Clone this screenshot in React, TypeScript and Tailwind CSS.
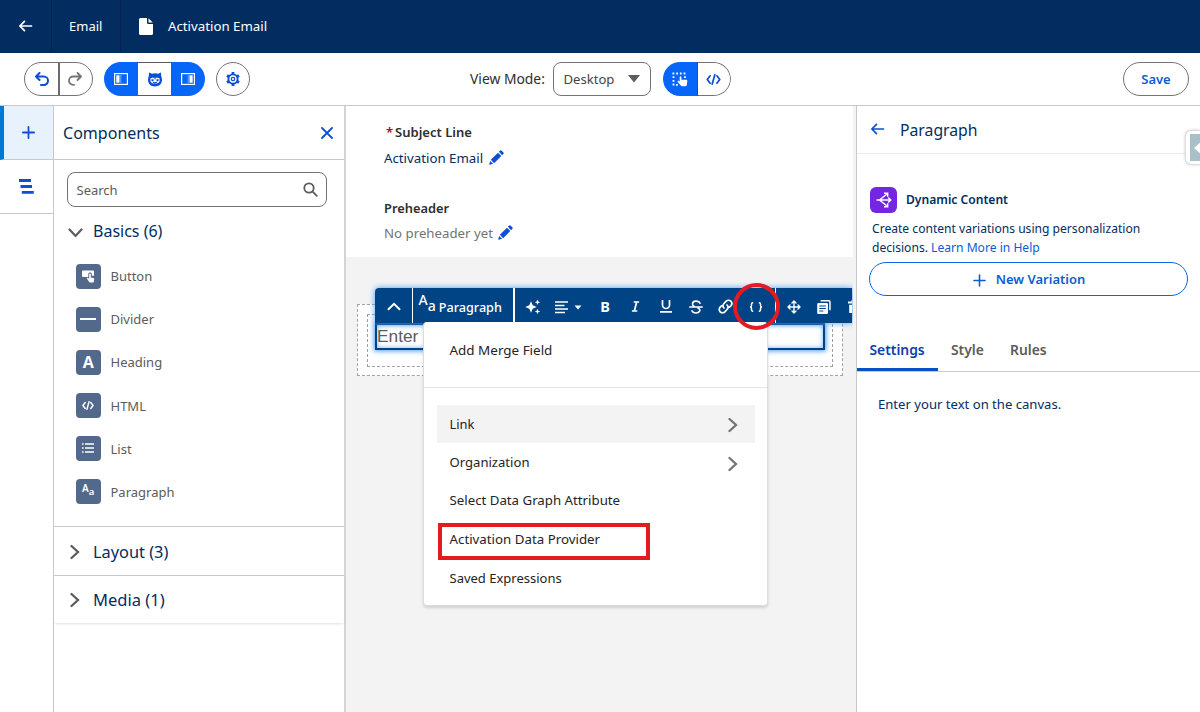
import React from "react";

type IconProps = { className?: string };

const BackArrow = ({ className }: IconProps) => (
  <svg viewBox="0 0 16 14" className={className} fill="none" stroke="currentColor" strokeWidth="2" strokeLinecap="round" strokeLinejoin="round">
    <path d="M15 7H1.600M6.800 1.500 1.400 7l5.400 5.500" />
  </svg>
);

const ChevronRight = ({ className }: IconProps) => (
  <svg viewBox="0 0 10 16" width="10" height="16" className={className} fill="none" stroke="currentColor" strokeWidth="2.300" strokeLinecap="round">
    <path d="m1.500 2 6.500 6-6.500 6" />
  </svg>
);

const CodeIcon = ({ className }: IconProps) => (
  <svg viewBox="0 0 16 12" className={className} fill="none" stroke="currentColor" strokeWidth="1.900" strokeLinecap="round" strokeLinejoin="round">
    <path d="M4.300 2 1.200 6l3.100 4M11.700 2l3.100 4-3.100 4M9.400 1 6.600 11" />
  </svg>
);

const Pencil = () => (
  <svg viewBox="0 0 14 14" width="15" height="15" fill="#0b4fd6" className="-mt-[4px]">
    <path d="M10.200.7a1.200 1.200 0 0 1 1.700 0l1.400 1.400a1.200 1.200 0 0 1 0 1.700l-1 1L9.200 1.700ZM8.400 2.500l3.100 3.100-6.700 6.700-3.100-3.100ZM1.100 10.200l2.700 2.700-3 .9c-.4.1-.7-.2-.6-.6Z" />
  </svg>
);

const LetterPair = ({ big, small, className }: { big: string; small: string; className?: string }) => (
  <span className={`flex items-start leading-none ${className ?? ""}`}>
    <span className={big}>A</span>
    <span className={small}>a</span>
  </span>
);

const basics: { label: string; icon: React.ReactNode }[] = [
  {
    label: "Button",
    icon: (
      <svg viewBox="0 0 24 25" width="24" height="25">
        <path fill="#fff" d="M7 6.500h10a1 1 0 0 1 1 1v4.200h-2.200V10c0-2-3.500-2-3.500 0v3H7a1 1 0 0 1-1-1V7.500a1 1 0 0 1 1-1Z" />
        <path fill="#fff" d="M13.200 10.200c0-1 1.600-1 1.600 0v3.200l2.500.5c.7.200 1 .6.900 1.300l-.6 3.300h-4l-2.600-3.700c-.4-.8.5-1.400 1.200-.9l1 .8Z" />
      </svg>
    ),
  },
  { label: "Divider", icon: <span className="h-[2px] w-4 bg-white" /> },
  { label: "Heading", icon: <span className="font-['Open_Sans',sans-serif] text-[16px] leading-none font-bold">A</span> },
  { label: "HTML", icon: <CodeIcon className="h-[9px] w-3" /> },
  {
    label: "List",
    icon: (
      <svg viewBox="0 0 12 10" width="12" height="10" stroke="#fff" strokeWidth="1.300">
        <path d="M0 1h1.600M3 1h9M0 5h1.600M3 5h9M0 9h1.600M3 9h9" />
      </svg>
    ),
  },
  {
    label: "Paragraph",
    icon: <LetterPair className="-mt-[3px]" big="text-[10px] font-semibold" small="mt-1 text-[9.500px] font-semibold" />,
  },
];

const mergeOptions = [
  { label: "Link", nested: true, active: true, size: "text-[12.900px]" },
  { label: "Organization", nested: true, active: false, size: "text-[13.100px]" },
  { label: "Select Data Graph Attribute", nested: false, active: false, size: "text-[13.250px]" },
  { label: "Activation Data Provider", nested: false, active: false, size: "text-[13.300px] pt-[1.500px]" },
  { label: "Saved Expressions", nested: false, active: false, size: "text-[13px] pt-[1.500px]" },
];

function AppHeader() {
  return (
    <header className="flex h-[53px] shrink-0 items-center bg-[#032d60] text-white">
      <div className="flex h-full w-[52px] items-center justify-center border-r border-[#04244d]">
        <BackArrow className="-mt-px h-[12px] w-[15px]" />
      </div>
      <div className="flex h-full w-[69px] items-center border-r border-[#04244d] pl-[17px] text-[13px]">Email</div>
      <svg viewBox="0 0 14 17" width="14" height="17" className="-mt-px ml-[18px]">
        <path fill="#fff" d="M1.500 0H8v4.500A1.500 1.500 0 0 0 9.500 6H14v9.500a1.500 1.500 0 0 1-1.500 1.500h-11A1.500 1.500 0 0 1 0 15.500v-14A1.500 1.500 0 0 1 1.500 0ZM9.500.3 13.700 4.500H10a.5.5 0 0 1-.5-.5Z" />
      </svg>
      <span className="ml-[15px] text-[13.250px]">Activation Email</span>
    </header>
  );
}

function PanelIcon({ right = false }: { right?: boolean }) {
  return (
    <svg viewBox="0 0 14 12" width="14" height="12">
      <rect x=".6" y=".6" width="12.800" height="10.800" fill="none" stroke="#fff" strokeWidth="1.200" />
      <rect x={right ? 8.5 : 2.3} y="2.300" width="3.200" height="7.400" fill="#fff" />
      <path d={right ? "M7.200 2v8" : "M6.800 2v8"} stroke="#8fbcff" strokeWidth=".8" />
    </svg>
  );
}

function Toolbar() {
  return (
    <div className="flex h-[53px] shrink-0 items-center border-b border-[#c9c9c9] bg-white pr-[11px] pl-6">
      <div className="flex h-[34px] w-[69px] overflow-hidden rounded-full border border-[#747474]">
        <button className="flex flex-1 items-center justify-center border-r-2 border-[#6a6a6a] pl-px text-[#0b4fd6]">
          <svg viewBox="0 0 14 14" width="14" height="14" fill="none" stroke="currentColor" strokeWidth="2" strokeLinecap="round" strokeLinejoin="round">
            <path d="M4.500 1 1 4.500 4.500 8M1.300 4.500h7.500a4.200 4.200 0 0 1 0 8.400H6" />
          </svg>
        </button>
        <button className="flex flex-1 items-center justify-center pr-px text-[#747474]">
          <svg viewBox="0 0 14 14" width="14" height="14" fill="none" stroke="currentColor" strokeWidth="1.800" strokeLinecap="round" strokeLinejoin="round">
            <path d="M9.500 1 13 4.500 9.500 8M12.700 4.500H5.200a4.200 4.200 0 0 0 0 8.400H6" />
          </svg>
        </button>
      </div>
      <div className="ml-[11px] flex h-[34px] w-[101px] overflow-hidden rounded-full">
        <button className="flex w-[34px] items-center justify-center bg-[#0666f8]"><PanelIcon /></button>
        <button className="flex w-[33px] items-center justify-center border-y border-[#5c5c5c] bg-white">
          <svg viewBox="0 0 16 15" width="16" height="15">
            <path fill="#0b4fd6" d="M2 .5 5 1.800a8 8 0 0 1 6 0L14 .5l.2 3.700a6.800 6.800 0 0 1 .8 3.600C15 12 12 14.500 8 14.500S1 12 1 7.800c0-1.400.2-2.600.8-3.600Z" />
            <path fill="#fff" d="M5.200 5.700h5.600a2 2 0 0 1 2 2.200c0 2.300-1.900 3.700-4.800 3.700s-4.800-1.400-4.800-3.700a2 2 0 0 1 2-2.200Z" />
            <path d="M8 5v2.300M3.800 8h3M9.200 8h3M5.600 7.300v2M10.400 7.300v2M6 10.300c1.200.7 2.800.7 4 0" stroke="#0b4fd6" strokeWidth="1.200" fill="none" />
          </svg>
        </button>
        <button className="flex w-[34px] items-center justify-center bg-[#0666f8]"><PanelIcon right /></button>
      </div>
      <button className="ml-[11px] flex h-[34px] w-[34px] items-center justify-center rounded-full border border-[#747474] text-[#0b4fd6]">
        <svg viewBox="0 0 16 16" width="16" height="16" fill="none" stroke="currentColor">
          <circle cx="8" cy="8" r="4.600" strokeWidth="1.900" />
          <circle cx="8" cy="8" r="1.700" strokeWidth="1.200" />
          <path d="M8 3.500V1M8 12.500V15M4 5.700 2 4.500M12 10.300l2 1.200M4 10.300l-2 1.200M12 5.700l2-1.200" strokeWidth="2.800" />
        </svg>
      </button>
      <span className="ml-[220px] w-[83px] pt-px text-[13.850px] whitespace-nowrap text-[#2e2e2e]">View Mode:</span>
      <div className="flex h-[34px] w-[98px] items-center justify-between rounded-[8px] border border-[#747474] pr-[10px] pl-[9.500px] text-[13.100px] text-[#444]">
        <span className="pt-[2px]">Desktop</span>
        <svg viewBox="0 0 12 8" width="12" height="8"><path d="M0 0h12L6 7.500Z" fill="#5c5c5c" /></svg>
      </div>
      <div className="ml-3 flex h-[34px] w-[68px] overflow-hidden rounded-full">
        <button className="flex w-[35px] items-center justify-center border-r border-[#3a4a66] bg-[#0666f8]">
          <svg viewBox="0 0 16 15" width="16" height="15">
            <path d="M.5 1.500h14M1.500 4.200v10M13 4.200v2M4 12.800h3" stroke="#fff" strokeWidth="1.800" strokeDasharray="1.800 1.900" fill="none" />
            <path fill="#fff" d="M7.700 5.200c0-1.200 1.700-1.200 1.700 0v2.600h4.900c.7 0 1.100.6 1 1.200l-.4 3.500c-.1 1-.8 1.700-1.800 1.700h-2.800c-.7 0-1.300-.3-1.700-.9L5.700 10c-.4-.9.5-1.500 1.200-1l.8.6Z" />
          </svg>
        </button>
        <button className="flex flex-1 items-center justify-center rounded-r-full border border-l-0 border-[#747474] pr-px text-[#0b4fd6]">
          <CodeIcon className="h-[11px] w-[15px]" />
        </button>
      </div>
      <button className="ml-auto h-[34px] w-[66px] rounded-full border border-[#747474] pt-px text-[13px] font-semibold text-[#0b5cd8]">Save</button>
    </div>
  );
}

function Rail() {
  return (
    <nav className="flex w-[54px] shrink-0 flex-col border-r border-[#c9c9c9] bg-white text-[#0b4fd6]">
      <button className="flex h-[54px] items-center justify-center border-b border-l-4 border-b-[#c9c9c9] border-l-[#0176d3] bg-[#e8f2fc]">
        <svg viewBox="0 0 14 14" width="13" height="13" stroke="currentColor" strokeWidth="1.900" strokeLinecap="round"><path d="M7 1v12M1 7h12" /></svg>
      </button>
      <button className="flex h-[54px] items-center justify-center border-b border-[#c9c9c9]">
        <svg viewBox="0 0 15 15" width="15" height="15" stroke="currentColor" strokeWidth="2.800"><path d="M0 1.500h12M1.500 7.500h11.500M2.800 13.400h12" /></svg>
      </button>
    </nav>
  );
}

function SectionHeader({ title, className }: { title: string; className: string }) {
  return (
    <div className={`flex items-center pl-4 text-[#032d60] ${className}`}>
      <ChevronRight className="mr-[13px] shrink-0 text-[#5c5c5c]" />
      {title}
    </div>
  );
}

function ComponentsPanel() {
  return (
    <aside className="flex w-[292px] shrink-0 flex-col border-r-2 border-[#d4d4d4] bg-white">
      <div className="flex h-[54px] items-center justify-between border-b border-[#c9c9c9] pr-[11px] pl-[9px]">
        <h2 className="pt-[2px] text-[16.050px] text-[#032d60]">Components</h2>
        <svg viewBox="0 0 12 12" width="12" height="12" stroke="#0b4fd6" strokeWidth="1.800" strokeLinecap="round"><path d="m1 1 10 10M11 1 1 11" /></svg>
      </div>
      <div className="mt-3 ml-[12.500px] flex h-[35px] w-[260px] items-center justify-between rounded-[8px] border border-[#747474] pr-2 pl-[9px] text-[13px] text-[#5c5c5c]">
        <span className="pt-[2px]">Search</span>
        <svg viewBox="0 0 15 15" width="15" height="15" fill="none" stroke="#5c5c5c" strokeWidth="1.800" strokeLinecap="round"><circle cx="6" cy="6" r="4.700" /><path d="m9.600 9.600 4.200 4.200" /></svg>
      </div>
      <div className="mt-[11px] flex h-[26px] items-center pl-[14px] text-[16px] text-[#032d60]">
        <svg viewBox="0 0 15 10" width="15" height="10" className="mt-[3px] mr-[10px]" fill="none" stroke="#5c5c5c" strokeWidth="2.200" strokeLinecap="round"><path d="m1.500 1.500 6 6.500 6-6.500" /></svg>
        Basics (6)
      </div>
      <ul className="mt-[10.500px] h-[271.500px]">
        {basics.map((item) => (
          <li key={item.label} className="flex h-[43.100px] items-center pl-[22px] text-[13px] text-[#5c5c5c]">
            <span className="mr-[10px] flex h-[25px] w-[24.500px] items-center justify-center rounded-[4px] bg-[#53698c] text-white">{item.icon}</span>
            <span className="pt-[2px]">{item.label}</span>
          </li>
        ))}
      </ul>
      <SectionHeader title="Layout (3)" className="h-[49px] border-t border-[#c9c9c9] pt-[2px] text-[16.350px]" />
      <SectionHeader title="Media (1)" className="h-[48px] border-t border-[#c9c9c9] pt-px text-[16.550px] shadow-[0_2px_2px_-1px_rgba(0,0,0,0.12)]" />
    </aside>
  );
}

function FormattingBar() {
  const cell = "flex h-full w-[30.250px] shrink-0 items-center justify-center";
  return (
    <div className="absolute top-[182px] left-[29px] flex h-[35px] w-[477px] items-center overflow-hidden rounded-tl-[4px] bg-[#014486] pt-[2px] text-white">
      <div className="-mt-[2px] flex h-[35px] w-[38px] shrink-0 items-center justify-center border-r border-white">
        <svg viewBox="0 0 14 9" width="14" height="9" fill="none" stroke="#fff" strokeWidth="2" strokeLinecap="round" className="mt-[2px]"><path d="M1.500 7.300 7 1.800l5.500 5.500" /></svg>
      </div>
      <div className="-mt-[2px] flex h-[35px] w-[102px] shrink-0 items-center border-r-2 border-white pl-[5.500px] font-medium">
        <LetterPair className="-mt-[5px]" big="text-[14px]" small="mt-[6px] text-[14px]" />
        <span className="ml-[3px] pt-[3px] text-[12.650px]">Paragraph</span>
      </div>
      <div className="flex h-full w-9 shrink-0 items-center justify-center">
        <svg viewBox="0 0 16 16" width="16" height="16" fill="#fff"><path d="M6 2.300 7.700 6.300 11.700 8 7.700 9.700 6 13.700 4.300 9.700.3 8 4.300 6.300ZM12.500.5l.8 2 2 .8-2 .8-.8 2-.8-2-2-.8 2-.8ZM12.500 9.700l.8 2 2 .8-2 .8-.8 2-.8-2-2-.8 2-.8Z" /></svg>
      </div>
      <div className="flex h-full w-[39px] shrink-0 items-center pt-px pl-1">
        <svg viewBox="0 0 27 14" width="27" height="14"><path d="M0 2h13M0 5.500h9.500M0 9h13M0 12.500h10" stroke="#fff" strokeWidth="1.700" /><path d="M19.500 5.500h7L23 9.500Z" fill="#fff" /></svg>
      </div>
      <div className={`${cell} text-[14.500px] font-bold`}>B</div>
      <div className={cell}>
        <svg viewBox="0 0 10 12" width="9" height="11" fill="none" stroke="#fff" strokeWidth="1.900"><path d="M3 1h6M1 11h6M6.300 1 3.700 11" /></svg>
      </div>
      <div className={cell}>
        <svg viewBox="0 0 12 13" width="12" height="13" fill="none" stroke="#fff" strokeWidth="1.700"><path d="M2.500 0v5a3.500 3.500 0 0 0 7 0V0M0 11.800h12" /></svg>
      </div>
      <div className={cell}>
        <svg viewBox="0 0 14 14" width="14" height="14" fill="none" stroke="#fff" strokeWidth="1.600" strokeLinecap="round"><path d="M11 3.300C9.800.3 3.500.3 3.500 3.900c0 1 .5 1.700 1.500 2.200M.8 7h12.400M9 8c3.500 1.500 1.500 5-2 5-2 0-3.500-.8-4-2.200" /></svg>
      </div>
      <div className={`${cell} pr-px`}>
        <svg viewBox="0 0 15 15" width="15" height="15" fill="none" stroke="#fff" strokeWidth="1.700" strokeLinecap="round"><path d="M6 9a3.200 3.200 0 0 1 0-4.500l2.200-2.300a3.200 3.200 0 0 1 4.600 4.600l-1.300 1.300M9 6a3.200 3.200 0 0 1 0 4.500l-2.200 2.300a3.200 3.200 0 0 1-4.600-4.600l1.300-1.300" /></svg>
      </div>
      <div className={cell}>
        <svg viewBox="0 0 14 10" width="14" height="10" fill="none" stroke="#fff" strokeWidth="1.500"><path d="M4.200.8H3.600C2.600.8 2.500 1.500 2.500 2.200v1.300C2.500 4.600 2 5 1 5c1 0 1.500.4 1.500 1.500v1.300c0 .7.100 1.400 1.100 1.400h.6M9.800.8h.6c1 0 1.100.7 1.100 1.400v1.300c0 1.100.5 1.500 1.500 1.500-1 0-1.500.4-1.500 1.500v1.300c0 .7-.1 1.400-1.100 1.400h-.6" /></svg>
      </div>
      <div className="-mt-[2px] ml-[3px] h-[35px] w-px shrink-0 bg-white" />
      <div className={`${cell} ml-[3px]`}>
        <svg viewBox="0 0 14 14" width="14" height="14" fill="none" stroke="#fff" strokeWidth="1.400" strokeLinejoin="round" strokeLinecap="round"><path d="M7 1v12M1 7h12M5 3l2-2 2 2M5 11l2 2 2-2M3 5 1 7l2 2M11 5l2 2-2 2" /></svg>
      </div>
      <div className={cell}>
        <svg viewBox="0 0 14 14" width="14" height="14" fill="#fff"><path d="M4.500 0H12a1.700 1.700 0 0 1 1.700 1.700v8.500H12.200V1.500H3.500V.9C3.500.4 4 0 4.500 0Z" /><path d="M1.500 3H9.700A1.300 1.300 0 0 1 11 4.300v8.400A1.300 1.300 0 0 1 9.700 14H1.500A1.300 1.300 0 0 1 .2 12.700V4.300A1.300 1.300 0 0 1 1.500 3Z" /><path d="M2.300 6h6.500M2.300 8.500h6.500M2.300 11h4" stroke="#014486" strokeWidth="1.200" /></svg>
      </div>
      <div className="shrink-0 pl-[8.500px]">
        <svg viewBox="0 0 12 13" width="12" height="13" fill="#fff"><path d="M0 1.500h3.500V0h5v1.500H12v2H0ZM1.200 4.700h9.600V13H1.200Z" /></svg>
      </div>
    </div>
  );
}

function MergeMenu() {
  return (
    <div className="absolute top-[216px] left-[77px] h-[284px] w-[345px] rounded-[4px] border border-[#dcdcdc] border-t-white bg-white text-[#242424] shadow-[0_2px_3px_rgba(0,0,0,0.14)]">
      <div className="h-[65px] border-b border-[#e5e5e5] pt-[17px] pl-[25.500px] text-[13.450px] leading-5">Add Merge Field</div>
      <ul className="pt-[17px] pr-3 pl-[13px]">
        {mergeOptions.map((o) => (
          <li key={o.label} className={`flex h-[38.400px] items-center justify-between pr-[17px] pl-[12.500px] ${o.size} ${o.active ? "bg-[#f3f3f3]" : ""}`}>
            {o.label}
            {o.nested && <ChevronRight className="mt-[2px] text-[#747474]" />}
          </li>
        ))}
      </ul>
      <div className="absolute top-[200px] left-[14px] h-[37px] w-[212px] border-4 border-[#e31b23]" />
    </div>
  );
}

function Canvas() {
  return (
    <main className="relative w-[510px] shrink-0 overflow-hidden bg-[#f3f3f3]">
      <section className="mr-[3px] h-[151px] bg-white pt-[17px] pl-[38px] text-[#2e2e2e]">
        <div className="flex h-5 items-center text-[13.050px] font-semibold"><span className="mr-[4px] ml-[2px] w-[5px] text-[#ba0517]">*</span>Subject Line</div>
        <div className="mt-[6px] flex h-5 items-center gap-[6px] text-[13.250px] text-[#032d60]">Activation Email <Pencil /></div>
        <div className="mt-[30px] flex h-5 items-center text-[12.850px] font-semibold">Preheader</div>
        <div className="mt-[5px] flex h-5 items-center gap-[5px] text-[13.250px] text-[#747474]">No preheader yet <Pencil /></div>
      </section>
      <section className="mt-[47px] ml-[11px] h-[72px] w-[486px] border border-dashed border-[#a3a3a3] bg-white p-[9px]">
        <div className="h-[53px] border border-dashed border-[#a3a3a3] px-[7px] pt-[8px]">
          <div className="h-[27px] w-[450px] border-2 border-[#014486] font-['Liberation_Sans',sans-serif] text-[17.300px] leading-[23px] text-[#5c5c5c] shadow-[0_0_5px_1px_#4a9af5,inset_0_0_5px_#6fb1fa]">Enter text</div>
        </div>
      </section>
      <div className="absolute top-[182px] left-[29px] h-[35px] w-[477px] rounded-tl-[4px] shadow-[0_0_6px_#4a9af5]" />
      <FormattingBar />
      <MergeMenu />
      <div className="absolute top-[176.500px] left-[387.300px] h-[47px] w-[47px] rounded-full border-4 border-[#e31b23]" />
      <div className="absolute top-0 right-0 h-full w-[3px] bg-[#f3f3f3]" />
    </main>
  );
}

function Inspector() {
  return (
    <aside className="relative flex min-w-0 flex-1 flex-col border-l border-[#c9c9c9] bg-white text-[#032d60]">
      <div className="flex h-12 items-center border-b border-[#ececec] pl-[13px]">
        <BackArrow className="-mt-px h-[12px] w-[15px] text-[#0b4fd6]" />
        <h2 className="ml-[15px] pt-[2px] text-[15.750px]">Paragraph</h2>
      </div>
      <div className="mt-[33px] flex items-center pl-[13px]">
        <span className="flex h-[26px] w-[27px] items-center justify-center rounded-[6px] bg-[#7526e3]">
          <svg viewBox="0 0 18 18" width="18" height="18" fill="none" stroke="#fff" strokeWidth="1.400"><path d="M1.500 9h14M4.500 9l7.500-6M4.500 9l7.500 6M13.200 6.500 15.800 9l-2.600 2.500M9 2.300h3.700v3.500M9 15.700h3.700v-3.500" /></svg>
        </span>
        <span className="ml-[9px] text-[12.100px] font-semibold">Dynamic Content</span>
      </div>
      <p className="mt-[7px] pl-[15px] text-[12.100px] leading-[18.500px] whitespace-nowrap">
        Create content variations using personalization
        <br />
        decisions. <a className="text-[#0b5cd8]">Learn More in Help</a>
      </p>
      <button className="mt-[5px] ml-3 flex h-[34px] w-[319px] items-center justify-center rounded-full border border-[#0b66e4] pl-px text-[13px] font-semibold text-[#0b5cd8]">
        <svg viewBox="0 0 14 14" width="13" height="13" stroke="currentColor" strokeWidth="1.700" className="mt-[3px] mr-[10px]" strokeLinecap="round"><path d="M7 1v12M1 7h12" /></svg>
        <span className="pt-px">New Variation</span>
      </button>
      <div className="mt-[35px] flex h-[41px] border-b border-[#c9c9c9] text-[13.850px] font-semibold text-[#5c5c5c]">
        <span className="h-10 w-[81px] shrink-0 border-b-3 border-[#0b4fc4] pt-[9px] pl-[12.500px] text-[#0b3fb0]">Settings</span>
        <span className="w-[72px] pt-[9px] pl-[13px]">Style</span>
        <span className="pt-[9px]">Rules</span>
      </div>
      <p className="mt-[23px] pl-[21px] text-[13.100px]">Enter your text on the canvas.</p>
      <div className="absolute top-[24px] right-0 flex h-[35px] w-[15px] items-center overflow-hidden rounded-l-[6px] border border-r-0 border-[#dcdcdc] bg-white pl-1 shadow-[0_0_3px_rgba(0,0,0,0.2)]">
        <span className="flex h-[27px] w-[10px] items-center bg-[#a9c0c9]">
          <svg viewBox="0 0 10 12" width="10" height="12" className="ml-1 shrink-0"><path d="M0 6 7 0v12Z" fill="#fff" /></svg>
        </span>
      </div>
    </aside>
  );
}

export default function App() {
  return (
    <div className="flex h-[712px] w-[1200px] flex-col overflow-hidden bg-white font-['Noto_Sans',sans-serif]">
      <AppHeader />
      <Toolbar />
      <div className="flex min-h-0 flex-1">
        <Rail />
        <ComponentsPanel />
        <Canvas />
        <Inspector />
      </div>
    </div>
  );
}
